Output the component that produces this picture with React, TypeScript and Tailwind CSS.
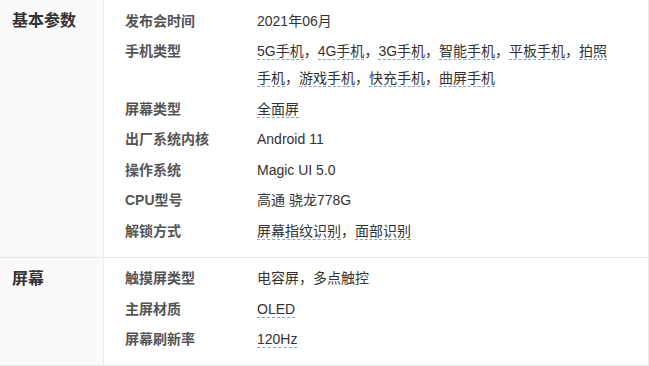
import React from "react";

type Spec = { label: string; values: string[]; linked?: boolean };

const sections: { title: string; rows: Spec[] }[] = [
  {
    title: "基本参数",
    rows: [
      { label: "发布会时间", values: ["2021年06月"] },
      {
        label: "手机类型",
        values: ["5G手机", "4G手机", "3G手机", "智能手机", "平板手机", "拍照手机", "游戏手机", "快充手机", "曲屏手机"],
        linked: true,
      },
      { label: "屏幕类型", values: ["全面屏"], linked: true },
      { label: "出厂系统内核", values: ["Android 11"] },
      { label: "操作系统", values: ["Magic UI 5.0"] },
      { label: "CPU型号", values: ["高通 骁龙778G"] },
      { label: "解锁方式", values: ["屏幕指纹识别", "面部识别"], linked: true },
    ],
  },
  {
    title: "屏幕",
    rows: [
      { label: "触摸屏类型", values: ["电容屏，多点触控"] },
      { label: "主屏材质", values: ["OLED"], linked: true },
      { label: "屏幕刷新率", values: ["120Hz"], linked: true },
    ],
  },
];

function Value({ row }: { row: Spec }) {
  return (
    <div className="w-[358px] text-[14px] leading-[27px] text-[#333]">
      {row.values.map((v, i) => (
        <React.Fragment key={v}>
          {row.linked ? (
            <span className="border-b border-dashed border-[#7aa7dc]">{v}</span>
          ) : (
            <span>{v}</span>
          )}
          {i < row.values.length - 1 && "，"}
        </React.Fragment>
      ))}
    </div>
  );
}

export default function App() {
  return (
    <div
      className="w-[649px] bg-white border-r border-[#e8e8e8]"
      style={{ fontFamily: '"Liberation Sans", "Noto Sans CJK SC", sans-serif' }}
    >
      {sections.map((s) => (
        <div key={s.title} className="flex border-b border-[#e8e8e8]">
          <div className="w-[104px] shrink-0 bg-[#fafafa] border-r border-[#ececec] pl-[12px] pt-[7px]">
            <div className="text-[16px] leading-[28px] font-bold text-[#333]">{s.title}</div>
          </div>
          <div className="flex flex-1 flex-col gap-[3.5px] pt-[7.5px] pb-[12px]">
            {s.rows.map((r) => (
              <div key={r.label} className="flex">
                <div className="w-[153px] shrink-0 pl-[21px] text-[14px] leading-[27px] font-semibold text-[#555]">
                  {r.label}
                </div>
                <Value row={r} />
              </div>
            ))}
          </div>
        </div>
      ))}
    </div>
  );
}
